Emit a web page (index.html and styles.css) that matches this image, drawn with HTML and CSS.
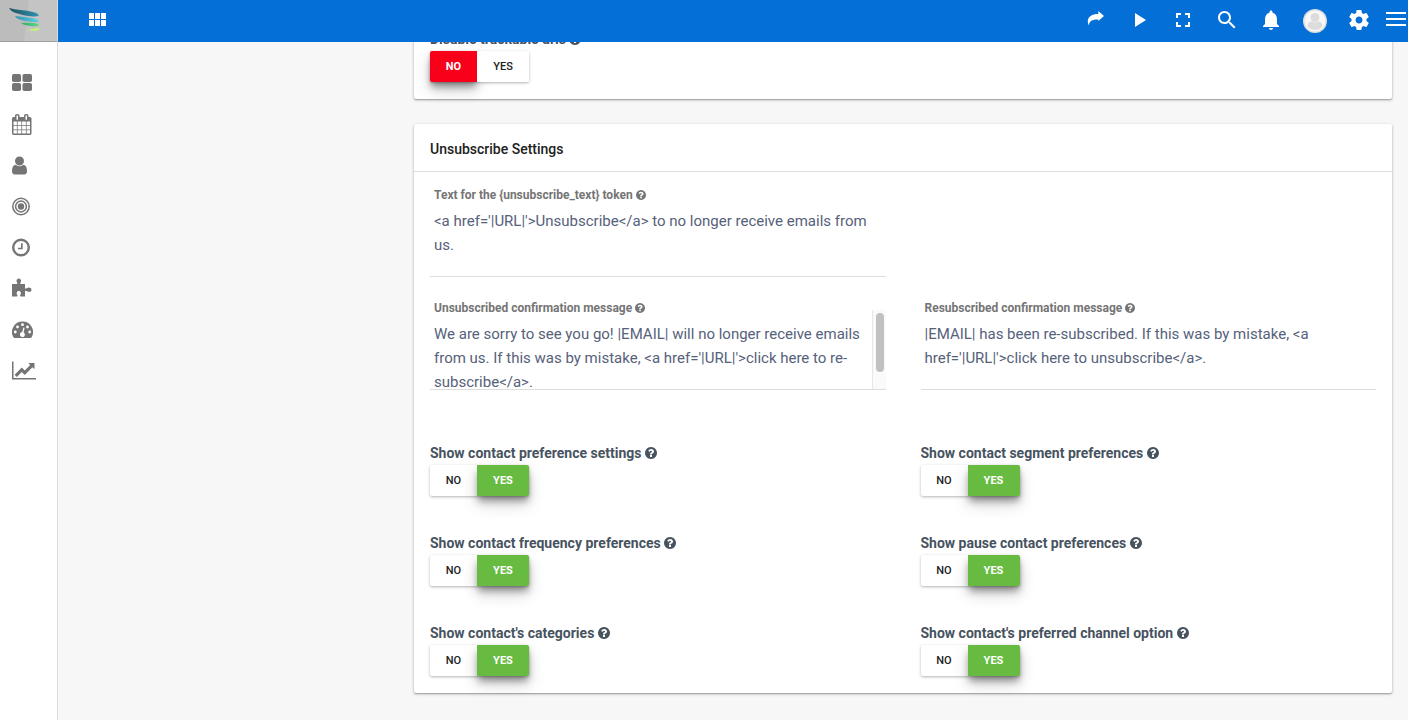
FILE: index.html
```html
<!DOCTYPE html>
<html lang="en">
<head>
<meta charset="utf-8">
<meta name="viewport" content="width=device-width, initial-scale=1">
<title>Email Settings</title>
<link rel="stylesheet" href="styles.css">
</head>
<body>
<svg class="sprite" aria-hidden="true">
  <symbol id="help" viewBox="128 128 1536 1536"><path d="M1024 1376v-192q0-14-9-23t-23-9h-192q-14 0-23 9t-9 23v192q0 14 9 23t23 9h192q14 0 23-9t9-23zm256-672q0-88-55.500-163t-138.500-116-170-41q-243 0-371 213-15 24 8 42l132 100q7 6 19 6 16 0 25-12 53-68 86-92 34-24 86-24 48 0 85.500 26t37.500 59q0 38-20 61t-68 45q-63 28-115.500 86.500t-52.500 125.500v36q0 14 9 23t23 9h192q14 0 23-9t9-23q0-19 21.500-49.500t54.500-49.500q32-18 49-28.500t46-35 44.500-48 28-60.500 12.500-81zm384 192q0 209-103 385.500t-279.500 279.500-385.500 103-385.500-103-279.500-279.500-103-385.500 103-385.500 279.500-279.500 385.500-103 385.500 103 279.500 279.500 103 385.500z"/></symbol>
</svg>
<div class="app">
  <a class="brand" href="#" aria-label="Home">
    <svg class="brand-art" viewBox="0 0 57 41" preserveAspectRatio="none" aria-hidden="true">
      <defs>
        <linearGradient id="g1" x1="0" x2="1"><stop offset="0" stop-color="#1f5262"/><stop offset="1" stop-color="#3191b0"/></linearGradient>
        <linearGradient id="g2" x1="0" x2="1"><stop offset="0" stop-color="#3292b4"/><stop offset="1" stop-color="#5cd2e0"/></linearGradient>
        <linearGradient id="g3" x1="0" x2="1"><stop offset="0" stop-color="#38a86e"/><stop offset="1" stop-color="#5cd884"/></linearGradient>
      </defs>
      <path fill="#bcbcbc" d="M0 0h57v41H0z"/>
      <path fill="#c4c4c4" d="M29 0h28v41H24z"/>
      <path fill="url(#g1)" d="M9 8c7 2 16 2 24 4 4 1 6 2 5.500 4-5 1-13 0-19-2-5-1-9-3-10.500-6z"/>
      <path fill="url(#g2)" d="M15 16c6 1 12 1 17 2 5 1 7 2 6.500 4-5 0-11 0-15.500-1.500-4-1-7-2.500-8-4.500z"/>
      <path fill="url(#g3)" d="M21 23c4 0 8-.5 12 0 4 .3 6 1 5.500 3-6 .5-14 0-17.500-3z"/>
      <path fill="#c4f078" d="M28 30c4-1 7-2.500 11.500-2 .5 3-6 4-11.500 2z"/>
    </svg>
  </a>
  <header class="topbar">
    <button class="bar-btn" type="button" aria-label="Apps"><svg viewBox="0 0 24 24"><path d="M4 11h5V5H4v6zm0 7h5v-6H4v6zm6 0h5v-6h-5v6zm6 0h5v-6h-5v6zm-6-7h5V5h-5v6zm6-6v6h5V5h-5z"/></svg></button>
    <nav class="bar-tools" aria-label="Tools">
      <button class="bar-btn" type="button" aria-label="Share"><svg viewBox="0 0 24 24"><path d="M21 8 15.300 3v3C9 6 4.800 8.500 4.800 13.500c0 1.500.3 2.700 1 3.900.3-4.400 3.700-6 9.500-5.900V13z"/></svg></button>
      <button class="bar-btn" type="button" aria-label="Play"><svg viewBox="0 0 24 24"><path d="M8 5v14l11-7z"/></svg></button>
      <button class="bar-btn" type="button" aria-label="Full screen"><svg viewBox="0 0 24 24"><path d="M7 14H5v5h5v-2H7v-3zm-2-4h2V7h3V5H5v5zm12 7h-3v2h5v-5h-2v3zM14 5v2h3v3h2V5h-5z"/></svg></button>
      <button class="bar-btn" type="button" aria-label="Search"><svg viewBox="0 0 24 24"><path d="M15.500 14h-.79l-.28-.27C15.410 12.590 16 11.110 16 9.500 16 5.910 13.090 3 9.500 3S3 5.910 3 9.500 5.910 16 9.500 16c1.610 0 3.090-.59 4.230-1.570l.27.28v.79l5 4.990L20.490 19l-4.990-5zm-6 0C7.010 14 5 11.990 5 9.500S7.010 5 9.500 5 14 7.010 14 9.500 11.990 14 9.500 14z"/></svg></button>
      <button class="bar-btn" type="button" aria-label="Notifications"><svg viewBox="0 0 24 24"><path d="M12 22c1.100 0 2-.9 2-2h-4c0 1.100.89 2 2 2zm6-6v-5c0-3.070-1.640-5.640-4.500-6.320V4c0-.83-.67-1.500-1.500-1.500s-1.500.67-1.500 1.500v.68C7.630 5.360 6 7.920 6 11v5l-2 2v1h16v-1l-2-2z"/></svg></button>
      <button class="bar-btn" type="button" aria-label="Account"><svg viewBox="0 0 24 24"><circle cx="12" cy="13" r="12" fill="#dedede"/><circle cx="12" cy="13" r="10.500" fill="#f8f8f8"/><circle cx="12" cy="9.500" r="4.500" fill="#dcdcdc"/><path fill="#dcdcdc" d="M4.500 18c0-3 2-4.500 4.500-4.500 2 1.500 4 1.500 6 0 2.500 0 4.500 1.500 4.500 4.500-2 2.800-4.500 4-7.500 4s-5.500-1.200-7.500-4z"/></svg></button>
      <button class="bar-btn" type="button" aria-label="Settings"><svg viewBox="0 0 24 24"><path d="M19.430 12.980c.04-.32.070-.64.070-.98s-.03-.66-.07-.98l2.110-1.650c.19-.15.240-.42.120-.64l-2-3.460c-.12-.22-.39-.3-.61-.22l-2.490 1c-.52-.4-1.080-.73-1.690-.98l-.38-2.650C14.460 2.180 14.250 2 14 2h-4c-.25 0-.46.180-.49.420l-.38 2.650c-.61.250-1.170.590-1.690.980l-2.490-1c-.23-.09-.49 0-.61.220l-2 3.460c-.13.220-.07.490.120.640l2.110 1.650c-.04.320-.07.650-.07.980s.03.660.07.980l-2.110 1.650c-.19.150-.24.420-.12.640l2 3.460c.12.220.39.300.61.220l2.490-1c.52.400 1.080.730 1.690.980l.38 2.650c.03.240.24.420.49.420h4c.25 0 .46-.18.490-.42l.38-2.650c.61-.25 1.170-.59 1.690-.98l2.490 1c.23.090.49 0 .61-.22l2-3.460c.12-.22.070-.49-.12-.64l-2.110-1.650zM12 15.500c-1.930 0-3.500-1.570-3.500-3.500s1.570-3.500 3.500-3.500 3.500 1.570 3.500 3.500-1.570 3.500-3.500 3.500z"/></svg></button>
      <button class="bar-btn menu-btn" type="button" aria-label="Menu"><svg viewBox="0 0 20 24"><path d="M0 4h20v2H0zM0 10h20v2H0zM0 16h20v2H0z"/></svg></button>
    </nav>
  </header>

  <nav class="sidebar" aria-label="Main">
    <a href="#" aria-label="Dashboard"><svg viewBox="0 0 20 21"><rect y="1" width="9" height="8" rx="1.800"/><rect x="10.500" y="1" width="9.500" height="8" rx="1.800"/><rect y="10" width="9" height="8" rx="1.800"/><rect x="10.500" y="10" width="9.500" height="8" rx="1.800"/></svg></a>
    <a href="#" aria-label="Calendar"><svg viewBox="64 0 1664 1792"><path d="M192 1664h288v-288h-288v288zm352 0h320v-288h-320v288zm-352-352h288v-320h-288v320zm352 0h320v-320h-320v320zm-352-384h288v-288h-288v288zm736 736h320v-288h-320v288zm-384-736h320v-288h-320v288zm768 736h288v-288h-288v288zm-384-352h320v-320h-320v320zm-352-864v-288q0-13-9.500-22.500t-22.500-9.500h-64q-13 0-22.500 9.500t-9.500 22.500v288q0 13 9.500 22.500t22.500 9.500h64q13 0 22.500-9.500t9.500-22.500zm736 864h288v-320h-288v320zm-384-384h320v-288h-320v288zm384 0h288v-288h-288v288zm32-480v-288q0-13-9.500-22.500t-22.500-9.500h-64q-13 0-22.500 9.500t-9.500 22.500v288q0 13 9.500 22.500t22.500 9.500h64q13 0 22.500-9.500t9.500-22.500zm384-64v1280q0 52-38 90t-90 38h-1408q-52 0-90-38t-38-90v-1280q0-52 38-90t90-38h128v-96q0-66 47-113t113-47h64q66 0 113 47t47 113v96h384v-96q0-66 47-113t113-47h64q66 0 113 47t47 113v96h128q52 0 90 38t38 90z"/></svg></a>
    <a href="#" aria-label="Contacts"><svg viewBox="256 0 1280 1792"><path d="M1536 1399q0 109-62.500 187t-150.500 78h-854q-88 0-150.500-78t-62.500-187q0-85 8.500-160.500t31.500-152 58.500-131 94-89 134.500-34.500q131 128 313 128t313-128q76 0 134.500 34.500t94 89 58.500 131 31.500 152 8.500 160.500zm-256-887q0 159-112.500 271.500t-271.500 112.500-271.500-112.500-112.500-271.500 112.500-271.500 271.500-112.500 271.500 112.500 112.500 271.500z"/></svg></a>
    <a href="#" aria-label="Segments"><svg viewBox="0 0 18 21"><g fill="none" stroke="#757575" stroke-width="1.500"><circle cx="9" cy="10.500" r="8.200"/><circle cx="9" cy="10.500" r="5.400"/></g><circle cx="9" cy="10.500" r="3.200"/></svg></a>
    <a href="#" aria-label="Recent"><svg viewBox="0 0 18 21"><circle cx="9" cy="10.500" r="7.800" fill="none" stroke="#757575" stroke-width="2.400"/><path d="M9 6.200h1.700v6H6v-1.500h3z"/></svg></a>
    <a href="#" aria-label="Components"><svg viewBox="0 0 20 21"><path d="M0 6h4.500c1 0 1.200-.7.600-1.400C4.300 3.500 4.300 2.300 5 1.500c.9-1.200 2.800-1.200 3.600 0 .7.800.7 2-.1 3.100-.6.700-.4 1.400.6 1.400H13v3.700c0 1 .7 1.200 1.500.6 1.800-1.400 5-1 5 1.400 0 2.500-3.200 2.700-5 1.400-.8-.6-1.500-.4-1.500.6v4.800H8.900c-1 0-1.100-.7-.6-1.400 1-1.500.8-4.100-1.500-4.100s-2.600 2.600-1.500 4.100c.5.700.4 1.400-.6 1.400H0z"/></svg></a>
    <a href="#" aria-label="Points"><svg viewBox="0 0 21 21"><path d="M10.500 2.500A10.500 10.500 0 0 0 1.600 18.600c.2.300.5.400.9.400h16c.4 0 .7-.1.900-.4A10.500 10.500 0 0 0 10.500 2.500z"/><g fill="#fff"><circle cx="3.300" cy="13" r="1.400"/><circle cx="5.500" cy="8" r="1.400"/><circle cx="10.500" cy="5.700" r="1.400"/><circle cx="15.500" cy="8" r="1.400"/><circle cx="17.700" cy="13" r="1.400"/><path d="m11.400 8.500 1.200.3-1 4.600a2.500 2.500 0 1 1-1.400-.3z"/></g></svg></a>
    <a href="#" aria-label="Reports"><svg viewBox="0 0 2048 1792"><path d="M2048 1536v128h-2048v-1536h128v1408h1920zm-128-1248v435q0 21-19.500 29.500t-35.500-7.500l-121-121-633 633q-10 10-23 10t-23-10l-233-233-416 416-192-192 585-585q10-10 23-10t23 10l233 233 464-464-121-121q-16-16-7.500-35.500t29.500-19.500h435q14 0 23 9t9 23z"/></svg></a>
  </nav>

  <main class="main">
    <form class="content">
      <section class="card card-prev">
        <fieldset class="toggle">
          <legend>Disable trackable urls <svg class="help"><use href="#help"/></svg></legend>
          <div class="switch">
            <label class="opt no"><input type="radio" name="trackable" checked>NO</label>
            <label class="opt yes"><input type="radio" name="trackable">YES</label>
          </div>
        </fieldset>
      </section>

      <section class="card">
        <h2 class="card-title">Unsubscribe Settings</h2>
        <div class="card-body">
          <div class="fields">
            <div class="field first">
              <label for="token">Text for the {unsubscribe_text} token <svg class="help"><use href="#help"/></svg></label>
              <textarea id="token">&lt;a href='|URL|'&gt;Unsubscribe&lt;/a&gt; to no longer receive emails from us.</textarea>
            </div>
            <div class="field scrolls">
              <label for="unsub">Unsubscribed confirmation message <svg class="help"><use href="#help"/></svg></label>
              <textarea id="unsub">We are sorry to see you go! |EMAIL| will no longer receive emails from us. If this was by mistake, &lt;a href='|URL|'&gt;click here to re-subscribe&lt;/a&gt;.</textarea>
              <span class="track" aria-hidden="true"><span class="thumb"></span></span>
            </div>
            <div class="field">
              <label for="resub">Resubscribed confirmation message <svg class="help"><use href="#help"/></svg></label>
              <textarea id="resub">|EMAIL| has been re-subscribed. If this was by mistake, &lt;a href='|URL|'&gt;click here to unsubscribe&lt;/a&gt;.</textarea>
            </div>
          </div>
          <div class="toggles">
            <fieldset class="toggle">
              <legend>Show contact preference settings <svg class="help"><use href="#help"/></svg></legend>
              <div class="switch">
                <label class="opt no"><input type="radio" name="pref">NO</label>
                <label class="opt yes"><input type="radio" name="pref" checked>YES</label>
              </div>
            </fieldset>
            <fieldset class="toggle">
              <legend>Show contact segment preferences <svg class="help"><use href="#help"/></svg></legend>
              <div class="switch">
                <label class="opt no"><input type="radio" name="segment">NO</label>
                <label class="opt yes"><input type="radio" name="segment" checked>YES</label>
              </div>
            </fieldset>
            <fieldset class="toggle">
              <legend>Show contact frequency preferences <svg class="help"><use href="#help"/></svg></legend>
              <div class="switch">
                <label class="opt no"><input type="radio" name="frequency">NO</label>
                <label class="opt yes"><input type="radio" name="frequency" checked>YES</label>
              </div>
            </fieldset>
            <fieldset class="toggle">
              <legend>Show pause contact preferences <svg class="help"><use href="#help"/></svg></legend>
              <div class="switch">
                <label class="opt no"><input type="radio" name="pause">NO</label>
                <label class="opt yes"><input type="radio" name="pause" checked>YES</label>
              </div>
            </fieldset>
            <fieldset class="toggle">
              <legend>Show contact's categories <svg class="help"><use href="#help"/></svg></legend>
              <div class="switch">
                <label class="opt no"><input type="radio" name="categories">NO</label>
                <label class="opt yes"><input type="radio" name="categories" checked>YES</label>
              </div>
            </fieldset>
            <fieldset class="toggle">
              <legend>Show contact's preferred channel option <svg class="help"><use href="#help"/></svg></legend>
              <div class="switch">
                <label class="opt no"><input type="radio" name="channel">NO</label>
                <label class="opt yes"><input type="radio" name="channel" checked>YES</label>
              </div>
            </fieldset>
          </div>
        </div>
      </section>
    </form>
  </main>
</div>
</body>
</html>
```

FILE: styles.css
```css
* {
  box-sizing: border-box;
}

body {
  margin: 0;
  background: #f7f7f7;
  color: #47535f;
  font-family: Roboto, "Liberation Sans", sans-serif;
  font-size: 14px;
}

.sprite {
  display: none;
}

.app {
  display: grid;
  grid-template-columns: 58px 1fr;
  grid-template-rows: 42px 1fr;
  height: 100vh;
}

.brand {
  display: block;
  background: #bdbdbd;
  border-right: 1px solid #dcdcdc;
  border-bottom: 1px solid #a0a0a0;
}

.brand-art {
  display: block;
  width: 100%;
  height: 100%;
}

.topbar {
  display: flex;
  justify-content: space-between;
  align-items: flex-start;
  padding: 0 2px 0 17px;
  background: #056fd8;
}

.bar-tools {
  display: flex;
}

.bar-btn {
  display: flex;
  align-items: center;
  justify-content: center;
  width: 44px;
  height: 40px;
  padding: 0;
  border: 0;
  background: none;
}

.bar-btn svg {
  width: 24px;
  height: 24px;
  fill: #fff;
  overflow: visible;
}

.menu-btn {
  width: 20px;
  margin-left: 5px;
}

.menu-btn svg {
  width: 20px;
}

.sidebar {
  display: flex;
  flex-direction: column;
  padding: 21px 12px;
  background: #fff;
  border-right: 1px solid #dcdcdc;
}

.sidebar a {
  display: flex;
  align-items: center;
  height: 41px;
}

.sidebar svg {
  height: 21px;
  fill: #757575;
}

.main {
  overflow: hidden;
}

.content {
  display: grid;
  grid-template-columns: 1fr 3fr;
  gap: 25px 30px;
  margin-top: -30px;
  padding-right: 16px;
}

.card {
  grid-column: 2;
  background: #fff;
  border-radius: 2px;
  box-shadow: 0 1px 3px rgba(0, 0, 0, 0.3), 0 1px 1px rgba(0, 0, 0, 0.16);
}

.card-prev {
  padding: 17px 16px;
}

.card-title {
  margin: 0;
  padding: 14px 16px 11px;
  border-bottom: 1px solid #dedede;
  color: #212121;
  font-size: 14px;
  font-weight: 500;
  line-height: 22px;
}

.card-body {
  padding: 15px 16px 17px;
}

.fields {
  display: grid;
  grid-template-columns: 1fr 1fr;
  gap: 23px 35px;
}

.field {
  position: relative;
  display: flex;
  flex-direction: column;
}

.field.first,
.field.scrolls {
  grid-column: 1;
}

.field label {
  position: relative;
  z-index: 1;
  margin: 0 14px -6px 0;
  padding-left: 4px;
  color: #757575;
  font-size: 12px;
  font-weight: 700;
  line-height: 16px;
}

.field textarea {
  display: block;
  width: 100%;
  height: 80px;
  padding: 12px 4px 0;
  border: 0;
  border-bottom: 1px solid #dedede;
  outline: 0;
  resize: none;
  background: transparent;
  color: #56617a;
  font: 400 15px/24px Roboto, "Liberation Sans", sans-serif;
}

.scrolls textarea {
  padding-right: 18px;
  scrollbar-width: none;
}

.track {
  position: absolute;
  right: 0;
  bottom: 1px;
  width: 14px;
  height: 79px;
  padding: 3px 2px 3px 3px;
  background: #fafafa;
  border-left: 1px solid #e8e8e8;
}

.thumb {
  display: block;
  width: 8px;
  height: 59px;
  border-radius: 4px;
  background: #c1c1c1;
}

.help {
  width: 12px;
  height: 12px;
  fill: currentColor;
  vertical-align: -1px;
}

.field .help {
  width: 10px;
  height: 10px;
  vertical-align: -1px;
}

.toggles {
  display: grid;
  grid-template-columns: 1fr 1fr;
  gap: 37px 35px;
  margin-top: 53px;
}

.toggle {
  min-width: 0;
  margin: 0;
  padding: 0;
  border: 0;
}

.toggle legend {
  margin-bottom: 2px;
  padding: 0;
  font-weight: 700;
  line-height: 20px;
}

.switch {
  display: inline-flex;
  vertical-align: top;
  border-radius: 2px;
  box-shadow: 0 1px 3px rgba(0, 0, 0, 0.3);
}

.opt {
  position: relative;
  width: 47px;
  border-radius: 2px 0 0 2px;
  color: #212121;
  font-size: 11px;
  font-weight: 500;
  line-height: 31px;
  text-align: center;
}

.opt.yes {
  width: 52px;
  border-radius: 0 2px 2px 0;
}

.opt input {
  position: absolute;
  inset: 0;
  margin: 0;
  opacity: 0;
}

.opt:has(input:checked) {
  box-shadow: 0 8px 16px rgba(0, 0, 0, 0.18), 0 6px 7px -1px rgba(0, 0, 0, 0.34);
  color: #fff;
  font-weight: 700;
}

.no:has(input:checked) {
  background: #f9001a;
}

.yes:has(input:checked) {
  background: #66bb40;
}

.opt:not(:has(input:checked)).yes {
  background: #fff;
}
```
